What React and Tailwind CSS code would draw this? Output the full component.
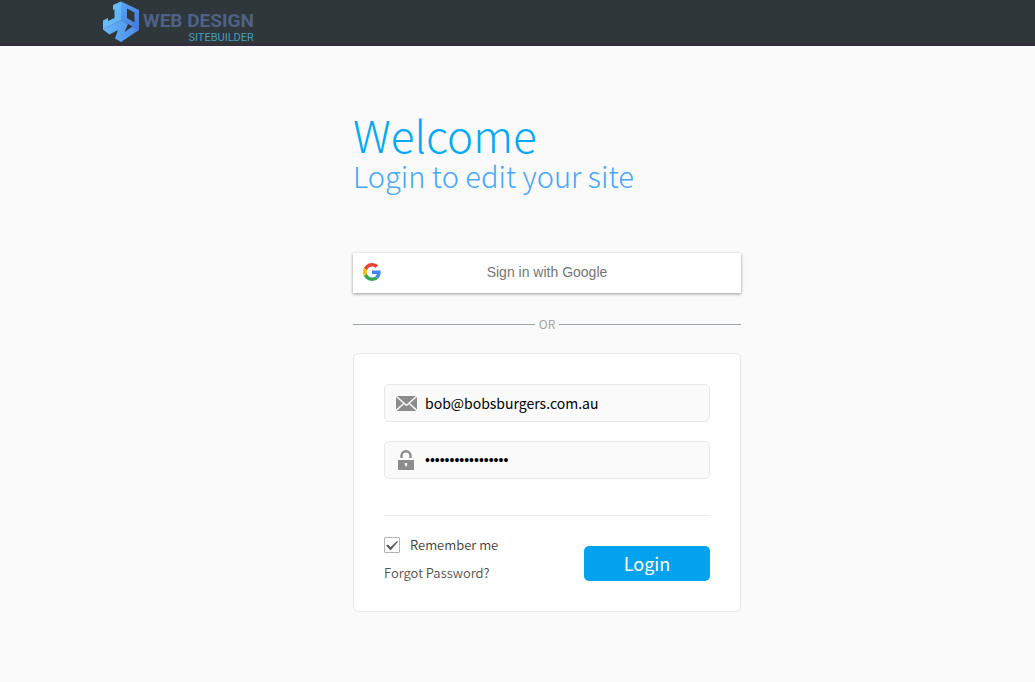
import React from "react";

function BrandMark() {
  return (
    <svg viewBox="0 0 38 42" className="h-[42px] w-[38px] shrink-0" aria-hidden="true">
      <defs>
        <linearGradient id="markLeft" x1="0" y1="0" x2="1" y2="1">
          <stop offset="0" stopColor="#6fc6fb" />
          <stop offset="1" stopColor="#5db0f8" />
        </linearGradient>
        <linearGradient id="markRight" x1="0" y1="0" x2="1" y2="1">
          <stop offset="0" stopColor="#5aa6f5" />
          <stop offset="1" stopColor="#4377dc" />
        </linearGradient>
        <linearGradient id="markBottom" x1="0" y1="0" x2="1" y2="0">
          <stop offset="0" stopColor="#66b8fa" />
          <stop offset="1" stopColor="#4a8ae6" />
        </linearGradient>
      </defs>
      <path d="M11 5L19 1.5V20L1 29.5V20.5L6 18V21L12.5 18V9.5L11 10Z" fill="url(#markLeft)" />
      <path fillRule="evenodd" d="M19 1.5L37 10V30L19 20ZM25 8.5V18L32.5 22.5V12.5Z" fill="url(#markRight)" />
      <path d="M1 29.5L19 20L26 24L22.5 32L30.5 26.5L37 30L19 42L13 38.5L16 30L7.5 34.5Z" fill="url(#markBottom)" />
    </svg>
  );
}

function GoogleMark() {
  return (
    <svg viewBox="0 0 48 48" className="h-[18px] w-[18px]" aria-hidden="true">
      <path fill="#EA4335" d="M24 9.5c3.54 0 6.71 1.22 9.21 3.6l6.85-6.85C35.9 2.38 30.47 0 24 0 14.62 0 6.51 5.38 2.56 13.22l7.98 6.19C12.43 13.72 17.74 9.5 24 9.5z" />
      <path fill="#4285F4" d="M46.98 24.55c0-1.57-.15-3.09-.38-4.55H24v9.02h12.94c-.58 2.96-2.26 5.48-4.78 7.18l7.73 6c4.51-4.18 7.09-10.36 7.09-17.65z" />
      <path fill="#FBBC05" d="M10.53 28.59c-.48-1.45-.76-2.99-.76-4.59s.27-3.14.76-4.59l-7.98-6.19C.92 16.46 0 20.12 0 24c0 3.88.92 7.54 2.56 10.78l7.97-6.19z" />
      <path fill="#34A853" d="M24 48c6.48 0 11.93-2.13 15.89-5.81l-7.73-6c-2.15 1.45-4.92 2.3-8.16 2.3-6.26 0-11.57-4.22-13.47-9.91l-7.98 6.19C6.51 42.62 14.62 48 24 48z" />
    </svg>
  );
}

function MailIcon() {
  return (
    <svg viewBox="0 0 21 15" className="h-[15px] w-[21px]" aria-hidden="true">
      <path fill="#8c8c8c" d="M1 0H20L10.5 8.5ZM0 1L7 7.2L0 13.5ZM21 1V13.5L14 7.2ZM8 8.2L10.5 10.3L13 8.2L20.3 15H.7Z" />
    </svg>
  );
}

function LockIcon() {
  return (
    <svg viewBox="0 0 16 20" className="h-5 w-4" aria-hidden="true">
      <path d="M3.5 8V5.7a4.5 4.5 0 0 1 9 0V8" fill="none" stroke="#8c8c8c" strokeWidth="2.4" />
      <path fill="#8c8c8c" fillRule="evenodd" d="M0 10H16V20H0ZM6.5 13.5L7.5 16.5H8.5L9.5 13.5L8.5 13H7.5Z" />
    </svg>
  );
}

function Field({ id, label, icon, ...input }) {
  return (
    <div className="flex h-[38px] items-center rounded-[5px] border border-[#e8e8e8] bg-[#fafafa]">
      <label htmlFor={id} aria-label={label} className="flex w-10 shrink-0 justify-center pl-[2px]">
        {icon}
      </label>
      <input
        id={id}
        className="h-full min-w-0 flex-1 bg-transparent text-[14px] leading-5 text-black outline-none [&[type=password]]:font-['Liberation_Sans',sans-serif]"
        {...input}
      />
    </div>
  );
}

export default function App() {
  return (
    <div className="min-h-screen bg-[#fafafa] font-['Source_Sans_Pro','Noto_Sans_CJK_SC',sans-serif]">
      <header className="h-[46px] border-b-3 border-[#342f3a] bg-[#2f373a] px-[102px]">
        <a href="#" className="inline-flex items-start gap-[3px]">
          <BrandMark />
          <span className="flex flex-col items-end pt-[10px] font-['Roboto',sans-serif]">
            <span className="text-[19px] leading-[22px] font-bold whitespace-nowrap text-[#4e6186]">WEB DESIGN</span>
            <span className="text-[11px] leading-[12px] text-[#489bbd]">SITEBUILDER</span>
          </span>
        </a>
      </header>

      <main className="mx-auto max-w-[447px] pt-16 pb-[70px] pl-[59px]">
        <h1 className="text-[44px] leading-[48px] font-light text-[#03a9f4]">Welcome</h1>
        <p className="text-[29px] leading-[34px] font-light text-[#45a8f8]">Login to edit your site</p>

        <button
          type="button"
          className="mt-[61px] flex h-10 w-full items-center bg-white px-[10px] pb-[2px] font-['Liberation_Sans',sans-serif] text-[14px] text-[#757575] shadow-[0_1px_3px_rgba(0,0,0,0.4)]"
        >
          <GoogleMark />
          <span className="flex-1 pr-[18px] text-center">Sign in with Google</span>
        </button>

        <div className="mt-[21px] flex h-5 items-center gap-1 text-[12px] leading-5 text-[#a0a3a8]">
          <span className="h-px flex-1 bg-[#a0a3a8]" />
          OR
          <span className="h-px flex-1 bg-[#a0a3a8]" />
        </div>

        <form
          className="mt-[19px] rounded-[5px] border border-[#e8e8e8] bg-white px-[30px] pt-[30px] pb-7"
          onSubmit={(e) => e.preventDefault()}
        >
          <Field id="email" label="Email" type="email" defaultValue="bob@bobsburgers.com.au" icon={<MailIcon />} />
          <div className="h-[19px]" />
          <Field id="password" label="Password" type="password" defaultValue="burgersandfries12" icon={<LockIcon />} />

          <div className="mt-9 flex items-start justify-between border-t border-[#e8e8e8] pt-[19px]">
            <div className="text-[13px] leading-5 font-[350] text-[#3c3c3c]">
              <label className="flex items-center gap-[10px]">
                <span className="grid h-4 w-4 place-items-center">
                  <input
                    type="checkbox"
                    defaultChecked
                    className="peer col-start-1 row-start-1 h-4 w-4 appearance-none rounded-[1px] border border-[#b4b4b4] bg-white"
                  />
                  <svg viewBox="0 0 12 9" className="pointer-events-none invisible col-start-1 row-start-1 h-[9px] w-3 peer-checked:visible" aria-hidden="true">
                    <path d="M0 4.5L2 3.4L4.5 6L11.2 0L12 .8L5 9H4Z" fill="#606060" />
                  </svg>
                </span>
                Remember me
              </label>
              <a href="#" className="mt-2 block text-[#525252]">
                Forgot Password?
              </a>
            </div>
            <button
              type="submit"
              className="mt-[11px] h-[35px] w-[126px] rounded-[5px] bg-[#03a2ef] text-[18px] leading-[35px] font-normal text-white"
            >
              Login
            </button>
          </div>
        </form>
      </main>
    </div>
  );
}
